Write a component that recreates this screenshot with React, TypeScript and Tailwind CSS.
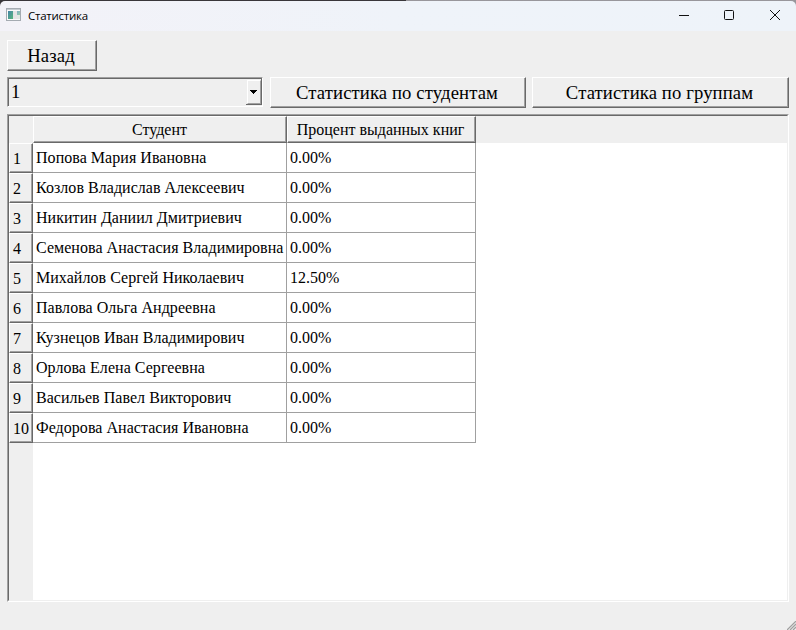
import React from "react";

const students: [string, string][] = [
  ["Попова Мария Ивановна", "0.00%"],
  ["Козлов Владислав Алексеевич", "0.00%"],
  ["Никитин Даниил Дмитриевич", "0.00%"],
  ["Семенова Анастасия Владимировна", "0.00%"],
  ["Михайлов Сергей Николаевич", "12.50%"],
  ["Павлова Ольга Андреевна", "0.00%"],
  ["Кузнецов Иван Владимирович", "0.00%"],
  ["Орлова Елена Сергеевна", "0.00%"],
  ["Васильев Павел Викторович", "0.00%"],
  ["Федорова Анастасия Ивановна", "0.00%"],
];

const raised =
  "border border-t-white border-l-white border-r-[#696969] border-b-[#696969] shadow-[inset_-1px_-1px_0_#a0a0a0]";

function Button({ label, className }: { label: string; className: string }) {
  return (
    <button
      className={`${raised} ${className} h-[31px] shrink-0 whitespace-nowrap pr-[2px] pb-px text-center text-[18.67px] leading-[29px] tracking-[0.12px]`}
    >
      {label}
    </button>
  );
}

function TitleBar() {
  return (
    <div className="h-[31px] shrink-0 bg-linear-to-r from-[#39363a] from-51% to-[#98969b] to-51% pt-px">
      <header className="flex h-[30px] items-center rounded-t-[5px] bg-linear-to-r from-[#f3f2f8] via-[#eff3f9] to-[#eef3f9] font-['Open_Sans',sans-serif]">
        <svg className="mb-[2px] ml-[6px] h-[14px] w-[16px]" viewBox="0 0 16 14" shapeRendering="crispEdges">
          <defs>
            <linearGradient id="pane" x1="0" y1="0" x2="1" y2="1">
              <stop offset="0" stopColor="#4583a9" />
              <stop offset="1" stopColor="#58b77b" />
            </linearGradient>
          </defs>
          <rect x="0.5" y="0.5" width="14" height="12" fill="#fafafa" stroke="#a5abb2" />
          <rect x="1" y="1" width="13" height="1" fill="#c5cbd1" />
          <rect x="2" y="3" width="5" height="8" fill="url(#pane)" />
          <rect x="7" y="3" width="4" height="8" fill="#e4e4e4" />
          <rect x="11" y="3" width="3" height="4" fill="url(#pane)" opacity="0.65" />
          <rect x="11" y="7" width="3" height="4" fill="#e1e8e4" />
        </svg>
        <span className="ml-[6px] text-[11.5px] tracking-[-0.25px]">Статистика</span>
        <svg className="mr-[14px] mb-[2px] ml-auto h-[12px] w-[104px]" viewBox="0 0 104 12" fill="none" stroke="#111">
          <path d="M1 6.5h10" />
          <rect x="46.5" y="1.5" width="9" height="9" rx="1" />
          <path d="M92 1l10 10M102 1l-10 10" />
        </svg>
      </header>
    </div>
  );
}

function ComboBox() {
  return (
    <div className="flex h-[30px] w-[256px] shrink-0 border border-t-[#a0a0a0] border-l-[#a0a0a0] border-r-white border-b-white">
      <div className="flex grow border-t border-l border-[#696969]">
        <span className="grow pl-[2px] text-[18.67px] leading-[26px]">1</span>
        <div className="mb-px flex h-[26px] w-[16px] border-r border-b border-[#696969]">
          <div className="mt-px ml-px flex grow border border-t-white border-l-white border-r-[#a0a0a0] border-b-[#a0a0a0] pt-[9px] pl-[2px]">
            <svg className="h-[4px] w-[7px] shrink-0" viewBox="0 0 7 4" shapeRendering="crispEdges">
              <path d="M0 0h7v1H6v1H5v1H4v1H3V3H2V2H1V1H0z" />
            </svg>
          </div>
        </div>
      </div>
    </div>
  );
}

function StudentTable() {
  return (
    <div className="flex h-[488px] w-[782px] border border-t-[#a0a0a0] border-l-[#a0a0a0] border-r-white border-b-white">
      <div className="flex grow flex-col border border-t-[#696969] border-l-[#696969] border-r-[#efefef] border-b-[#efefef] bg-white text-[16px]">
        <div className="flex h-[27px] shrink-0 bg-[#efefef] text-center leading-[25px]">
          <div className="w-[24px]" />
          <div className={`${raised} w-[254px] pr-px`}>Студент</div>
          <div className={`${raised} w-[189px] whitespace-nowrap pr-[2px]`}>Процент выданных книг</div>
        </div>
        {students.map(([name, percent], index) => (
          <div key={name} className="flex h-[30px] shrink-0">
            <div className={`${raised} w-[24px] shrink-0 bg-[#efefef] pl-[3px] leading-[30px]`}>{index + 1}</div>
            <div className="w-[254px] shrink-0 whitespace-nowrap border-r border-b border-[#a0a0a0] pl-[3px] leading-[29px] tracking-[0.04px]">
              {name}
            </div>
            <div className="w-[189px] border-r border-b border-[#a0a0a0] pl-[3px] leading-[29px]">{percent}</div>
          </div>
        ))}
        <div className="w-[24px] grow bg-[#efefef]" />
      </div>
    </div>
  );
}

export default function App() {
  return (
    <div className="relative flex h-[630px] w-[796px] flex-col overflow-hidden bg-[#efefef] font-['Liberation_Serif',serif] text-black">
      <TitleBar />
      <main className="px-[7px] pt-[9px]">
        <Button label="Назад" className="block w-[90px]" />
        <div className="mt-[6px] mb-[6px] flex items-start">
          <ComboBox />
          <Button label="Статистика по студентам" className="ml-[7px] w-[256px]" />
          <Button label="Статистика по группам" className="ml-[6px] w-[257px]" />
        </div>
        <StudentTable />
      </main>
      <svg className="absolute right-0 bottom-0 h-[9px] w-[9px]" viewBox="0 0 9 9" fill="none">
        <path d="M-1 9L9 -1" stroke="#fff" />
        <path d="M0 9L9 0M3 9L9 3M6 9L9 6" stroke="#a0a0a0" strokeWidth="1.3" />
      </svg>
    </div>
  );
}
